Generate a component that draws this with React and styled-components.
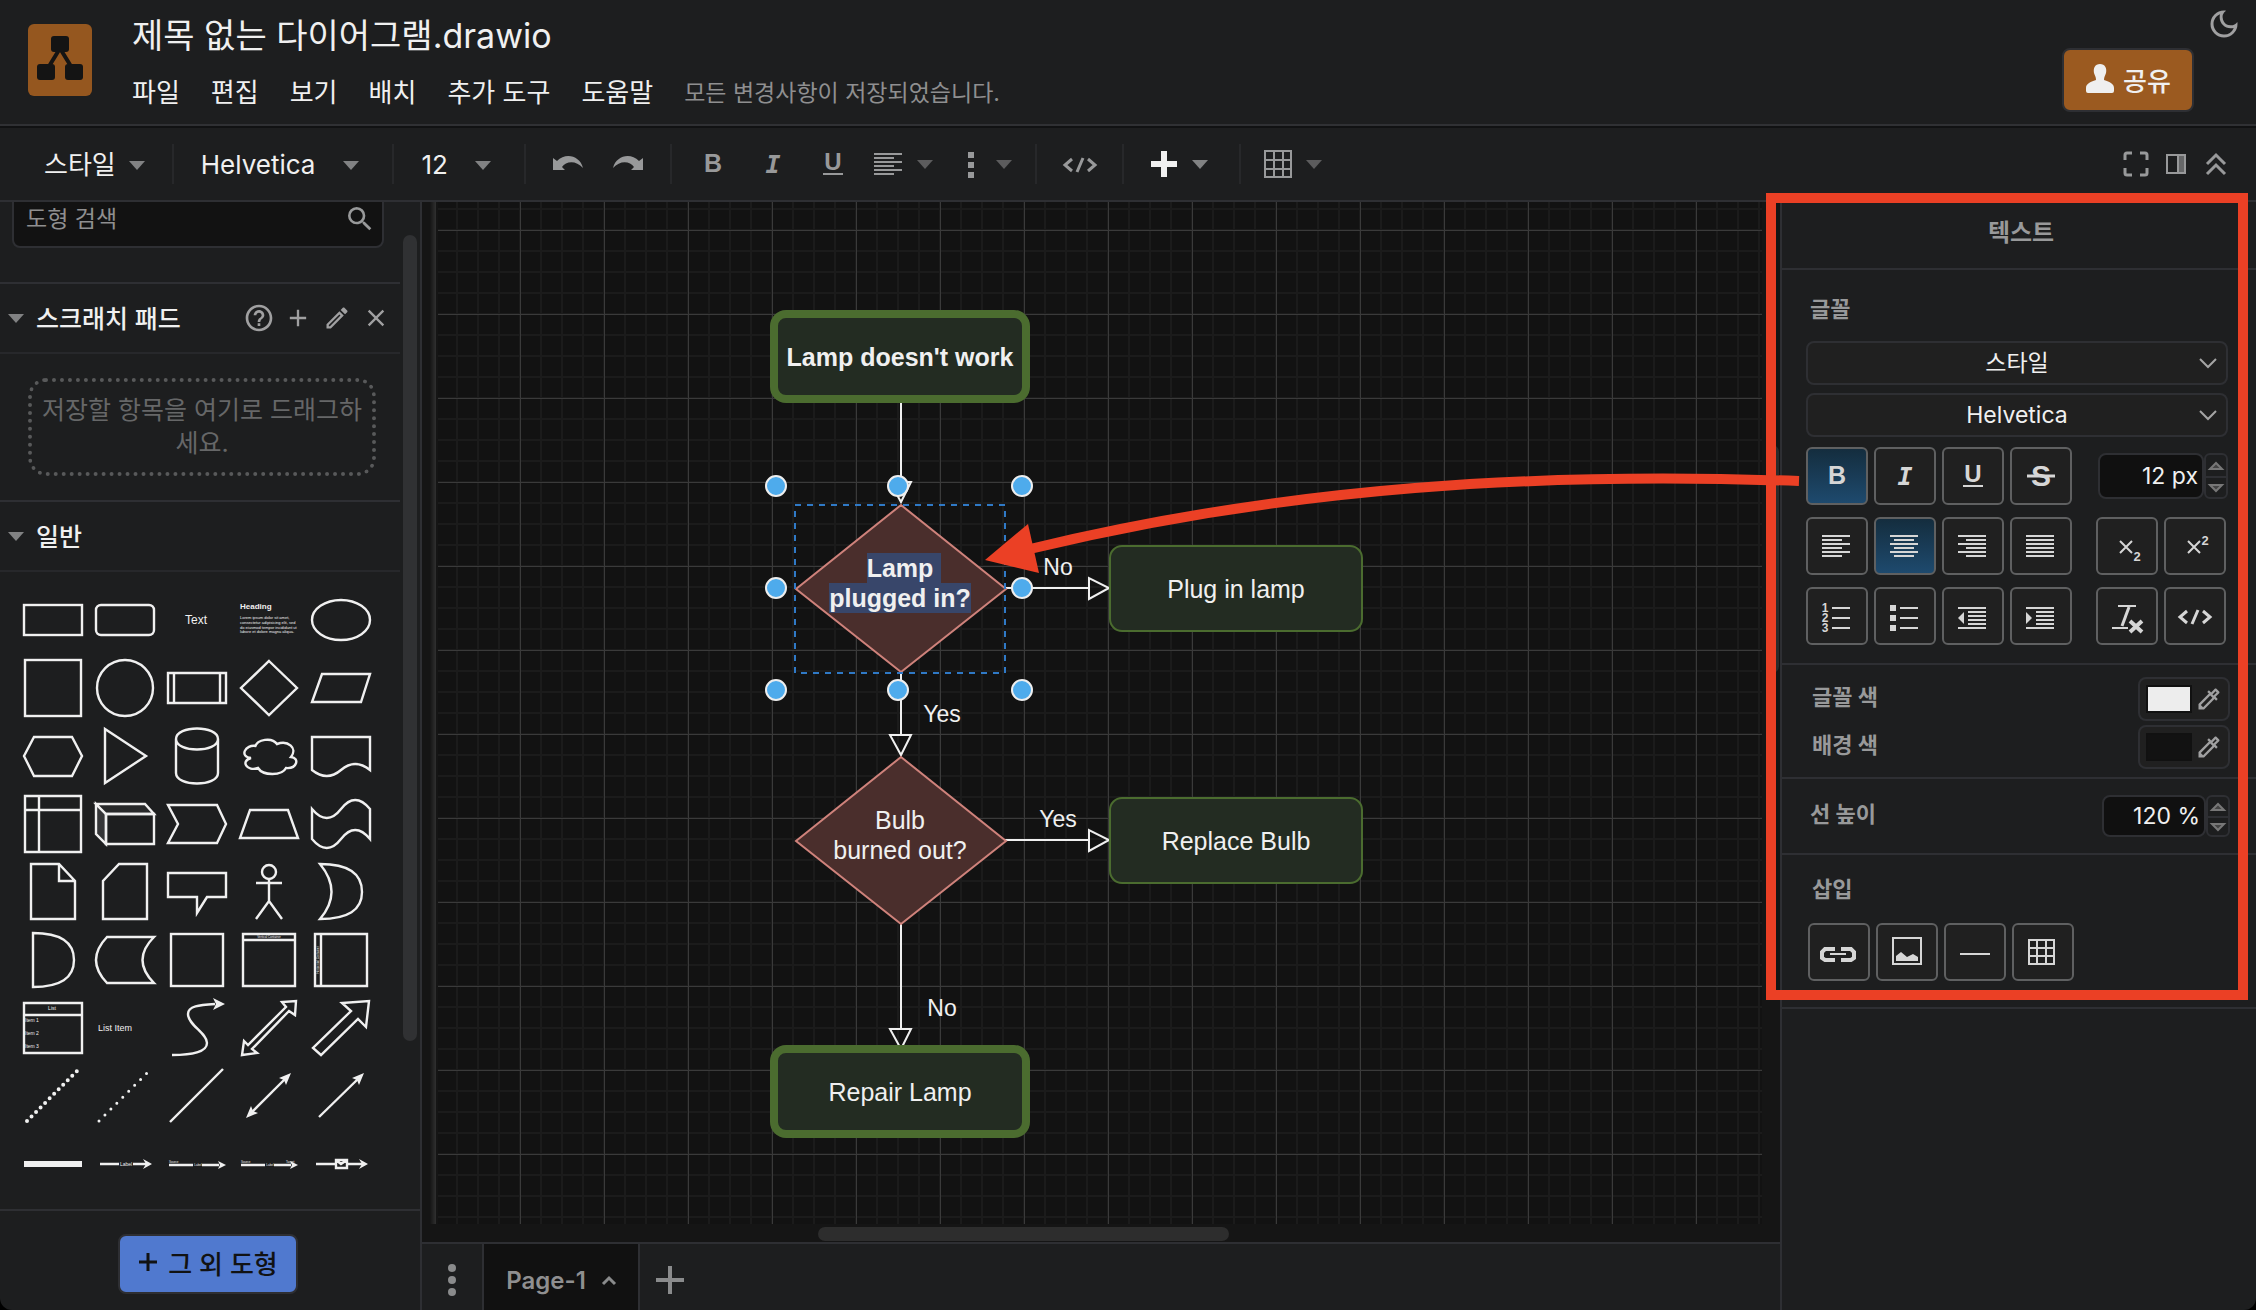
import React, { useState } from "react";
import styled, { createGlobalStyle, css } from "styled-components";
import {
  MdAdd,
  MdClose,
  MdHelpOutline,
  MdOutlineColorize,
  MdOutlineDarkMode,
  MdOutlineEdit,
  MdSearch,
} from "react-icons/md";

const GlobalStyle = createGlobalStyle`
  *, *::before, *::after { box-sizing: border-box; }
  html { background: #000000; }
  body { margin: 0; }
  body, button, input, select {
    font-family: Inter, "Noto Sans CJK KR", sans-serif;
  }
  button { padding: 0; border: none; background: none; color: inherit; cursor: pointer; }
  svg { display: block; flex: none; overflow: visible; }
`;

const menus = ["파일", "편집", "보기", "배치", "추가 도구", "도움말"];

/* ---------- 아이콘 ---------- */

const Caret = ({ dim }) => (
  <svg width="16" height="9" viewBox="0 0 16 9">
    <path d="M0 0H16L8 9Z" fill={dim ? "#5c5c5d" : "#818283"} />
  </svg>
);

const Icon = ({ children, size = 40 }) => (
  <svg
    width={size}
    height={size}
    viewBox={`${-size / 2} ${-size / 2} ${size} ${size}`}
    fill="none"
    stroke="currentColor"
    strokeWidth="2"
  >
    {children}
  </svg>
);

const Letter = ({ children, ...rest }) => (
  <text fill="currentColor" stroke="none" textAnchor="middle" {...rest}>
    {children}
  </text>
);

const glyphs = {
  bold: (
    <Letter y="8" fontFamily="Liberation Sans" fontWeight="700" fontSize="25">
      B
    </Letter>
  ),
  italic: (
    <Letter y="9" fontFamily="DejaVu Sans Mono" fontWeight="700" fontStyle="italic" fontSize="25">
      I
    </Letter>
  ),
  underline: (
    <>
      <Letter y="6" fontFamily="Liberation Sans" fontWeight="700" fontSize="24">
        U
      </Letter>
      <path d="M-10 10H10" />
    </>
  ),
  strike: (
    <>
      <Letter y="10" fontFamily="Liberation Sans" fontWeight="700" fontSize="30">
        S
      </Letter>
      <path d="M-14 0H14" strokeWidth="3" />
    </>
  ),
  left: <path d="M-15 -10H13M-15 -6H5M-15 -2H13M-15 2H5M-15 6H13M-15 10H5" />,
  center: <path d="M-15 -10H13M-11 -6H9M-15 -2H13M-11 2H9M-15 6H13M-11 10H9" />,
  right: <path d="M-15 -10H13M-7 -6H13M-15 -2H13M-7 2H13M-15 6H13M-7 10H13" />,
  justify: <path d="M-15 -10H13M-15 -6H13M-15 -2H13M-15 2H13M-15 6H13M-15 10H13" />,
  ordered: (
    <>
      <path d="M-5 -8H13M-5 2H13M-5 12H13" />
      {[1, 2, 3].map((n) => (
        <Letter key={n} x="-12" y={n * 10 - 14} fontSize="12" fontWeight="700" fontFamily="Liberation Sans">
          {n}
        </Letter>
      ))}
    </>
  ),
  bullets: (
    <>
      <path d="M-5 -8H13M-5 2H13M-5 12H13" />
      <path d="M-15 -8H-9M-15 2H-9M-15 12H-9" strokeWidth="6" />
    </>
  ),
  outdent: (
    <>
      <path d="M-15 -8H13M-5 -4H13M-5 0H13M-5 4H13M-5 8H13M-15 12H13" />
      <path d="M-15 2L-9 -4V8Z" fill="currentColor" stroke="none" />
    </>
  ),
  indent: (
    <>
      <path d="M-15 -8H13M-5 -4H13M-5 0H13M-5 4H13M-5 8H13M-15 12H13" />
      <path d="M-9 2L-15 -4V8Z" fill="currentColor" stroke="none" />
    </>
  ),
  sub: (
    <>
      <path d="M-7 -5L5 7M5 -5L-7 7" />
      <Letter x="10" y="15" fontSize="13" fontWeight="700" fontFamily="Liberation Sans">
        2
      </Letter>
    </>
  ),
  sup: (
    <>
      <path d="M-7 -5L5 7M5 -5L-7 7" />
      <Letter x="10" y="-1" fontSize="13" fontWeight="700" fontFamily="Liberation Sans">
        2
      </Letter>
    </>
  ),
  clear: (
    <>
      <path d="M-9 -10H9M-15 12H1" />
      <path d="M2 -9L-5 10" strokeWidth="3" />
      <path d="M3 5L15 16M15 5L3 16" strokeWidth="4" />
    </>
  ),
  code: <path d="M-8 -5L-15 1L-8 7M3 -6L-3 8M8 -5L15 1L8 7" strokeWidth="3" />,
  link: (
    <>
      <path d="M-4 -3H-14L-17 0V6L-14 8H-4M2 -3H12L15 0V6L12 8H2" strokeWidth="4" />
      <path d="M-9 2H7" />
    </>
  ),
  image: (
    <>
      <path d="M-14 -14H14V12H-14Z" />
      <path d="M-11 9V4L-6 0L0 5L6 2L11 5V9Z" fill="currentColor" stroke="none" />
    </>
  ),
  rule: <path d="M-15 2H15" />,
  table: <path d="M-14 -12H11V12H-14ZM-6 -12V12M3 -12V12M-14 -4H11M-14 4H11" />,
  dots: <path d="M-3 -9H3M-3 1H3M-3 11H3" strokeWidth="6" />,
  plus: <path d="M0 -13V13M-13 0H13" strokeWidth="6" />,
  grid: (
    <path d="M-13 -13H13V13H-13ZM-4 -13V13M5 -13V13M-13 -4H13M-13 5H13" />
  ),
  undo: (
    <path d="M-15 -6V6H-3L-6 3C-2 -3 8 -4 15 4C12 -8 -2 -12 -11 -3Z" fill="currentColor" stroke="none" />
  ),
  redo: (
    <path d="M15 -6V6H3L6 3C2 -3 -8 -4 -15 4C-12 -8 2 -12 11 -3Z" fill="currentColor" stroke="none" />
  ),
  fullscreen: (
    <path d="M-11 -4V-9Q-11 -11 -9 -11H-4M4 -11H9Q11 -11 11 -9V-4M11 4V9Q11 11 9 11H4M-4 11H-9Q-11 11 -11 9V4" strokeWidth="3" />
  ),
  sidepanel: (
    <>
      <path d="M2 -9H9V9H2Z" fill="#666768" />
      <path d="M-9 -9H9V9H-9Z" />
    </>
  ),
  collapse: <path d="M-9 0L0 -9L9 0M-9 10L0 1L9 10" strokeWidth="3" />,
};

/* ---------- 도형 팔레트 (한 칸의 중심이 0,0) ---------- */

const Tiny = (props) => (
  <text fill="#f0f0f0" stroke="none" fontFamily="Liberation Sans" {...props} />
);

const shapes = [
  ["사각형", <rect x="-29" y="-15" width="58" height="30" />],
  ["둥근 사각형", <rect x="-29" y="-15" width="58" height="30" rx="5" />],
  ["텍스트", <Tiny fontSize="12" x="-1" y="4" textAnchor="middle">Text</Tiny>],
  [
    "텍스트 상자",
    <>
      <Tiny fontSize="8" fontWeight="700" x="-29" y="-11">Heading</Tiny>
      <Tiny fontSize="4" x="-29" y="-1">Lorem ipsum dolor sit amet,</Tiny>
      <Tiny fontSize="4" x="-29" y="4">consectetur adipisicing elit, sed</Tiny>
      <Tiny fontSize="4" x="-29" y="9">do eiusmod tempor incididunt ut</Tiny>
      <Tiny fontSize="4" x="-29" y="13">labore et dolore magna aliqua.</Tiny>
    </>,
  ],
  ["타원", <ellipse rx="29" ry="20" />],
  ["정사각형", <rect x="-28" y="-28" width="56" height="56" />],
  ["원", <circle r="28" />],
  ["프로세스", <path d="M-29 -15H29V15H-29ZM-23 -15V15M23 -15V15" />],
  ["마름모", <path d="M0 -27L28 0L0 27L-28 0Z" />],
  ["평행사변형", <path d="M-19 -14H29L20 14H-29Z" />],
  ["육각형", <path d="M-19 -19H19L29 0L19 20H-19L-29 0Z" />],
  ["삼각형", <path d="M-20 -27L21 0L-20 27Z" />],
  ["원통", <path d="M-21 -17V17C-21 31 21 31 21 17V-17C21 -31 -21 -31 -21 -17C-21 -3 21 -3 21 -17" />],
  [
    "구름",
    <path d="M-13 -10C-24 -12 -30 1 -18 2C-29 5 -22 16 -11 12C-6 20 13 20 17 12C28 13 31 2 22 1C29 -8 19 -16 8 -12C3 -19 -12 -17 -14 -9" />,
  ],
  ["문서", <path d="M-29 -19H29V14Q14 2 0 14T-29 14Z" />],
  ["내부 저장소", <path d="M-28 -28H28V28H-28ZM-14 -28V28M-28 -14H28" />],
  [
    "정육면체",
    <>
      <path d="M-29 -20L-19 -10V20L-29 10Z" fill="#343537" />
      <path d="M-29 -20H20L29 -10H-19Z" fill="#28292a" />
      <path d="M-19 -10H29V20H-19Z" />
    </>,
  ],
  ["단계", <path d="M-29 -19H20L29 0L20 19H-29L-19 0Z" />],
  ["사다리꼴", <path d="M-19 -14H19L29 14H-29Z" />],
  ["테이프", <path d="M-29 -15Q-14 3 0 -15T29 -15V15Q14 -3 0 15T-29 15Z" />],
  ["노트", <path d="M-22 -28H6L22 -11V27H-22ZM6 -28V-11H22" />],
  ["카드", <path d="M-6 -28H22V27H-22V-11Z" />],
  ["말풍선", <path d="M-29 -19H29V5H10L0 21V5H-29Z" />],
  [
    "액터",
    <>
      <circle cy="-20" r="7" />
      <path d="M0 -13V9M-13 -9H13M-13 27L0 9L13 27" />
    </>,
  ],
  ["또는", <path d="M-21 -28Q21 -28 21 0Q21 27 -21 27Q2 0 -21 -28Z" />],
  ["그리고", <path d="M-20 -27Q21 -27 21 0Q21 27 -20 27Z" />],
  ["데이터 저장소", <path d="M-18 -23H29Q6 0 29 23H-18Q-40 0 -18 -23Z" />],
  ["컨테이너", <rect x="-26" y="-26" width="52" height="52" />],
  [
    "세로 컨테이너",
    <>
      <path d="M-26 -26H26V26H-26ZM-26 -20H26" />
      <Tiny fontSize="3" y="-22" textAnchor="middle">Vertical Container</Tiny>
    </>,
  ],
  [
    "가로 컨테이너",
    <>
      <path d="M-26 -26H26V26H-26ZM-20 -26V26" />
      <Tiny fontSize="3" y="-22" textAnchor="middle" transform="rotate(-90)">Horizontal Container</Tiny>
    </>,
  ],
  [
    "목록",
    <>
      <path d="M-29 -25H29V25H-29ZM-29 -13H29" />
      <Tiny fontSize="5" x="-1" y="-18" textAnchor="middle">List</Tiny>
      <Tiny fontSize="5" x="-28" y="-6">Item 1</Tiny>
      <Tiny fontSize="5" x="-28" y="7">Item 2</Tiny>
      <Tiny fontSize="5" x="-28" y="20">Item 3</Tiny>
    </>,
  ],
  ["목록 항목", <Tiny fontSize="9" x="-27" y="3">List Item</Tiny>],
  [
    "곡선",
    <>
      <path d="M-25 27C-5 27 10 24 10 15C10 5 -9 -3 -9 -14C-9 -22 2 -23 18 -24" />
      <path d="M28 -24L16 -30L19 -24L16 -18Z" fill="#f0f0f0" stroke="none" />
    </>,
  ],
  [
    "양방향 화살표",
    <path d="M27 -27L26 -13L20 -17L-17 21L-12 25L-27 27L-25 13L-21 17L17 -21L13 -26Z" />,
  ],
  ["화살표", <path d="M28 -27L25 -1L17 -9L-20 27L-28 20L10 -17L1 -25Z" />],
  ["파선", <path d="M-26 25L25 -26" strokeWidth="4" strokeDasharray="0 6.4" strokeLinecap="round" />],
  ["점선", <path d="M-26 25L22 -23" strokeWidth="3" strokeDasharray="0 8.4" strokeLinecap="round" />],
  ["선", <path d="M-27 26L26 -27" />],
  [
    "양방향 연결선",
    <>
      <path d="M-18 17L17 -18" />
      <path d="M22 -23L10 -18L15 -16L17 -11ZM-23 22L-11 17L-16 15L-18 10Z" fill="#f0f0f0" stroke="none" />
    </>,
  ],
  [
    "방향 연결선",
    <>
      <path d="M-22 21L18 -18" />
      <path d="M23 -23L11 -18L16 -16L18 -11Z" fill="#f0f0f0" stroke="none" />
    </>,
  ],
  ["링크", <path d="M-29 0H29" strokeWidth="6" />],
  [
    "레이블 연결선",
    <>
      <path d="M-25 0H-6M8 0H21" />
      <path d="M27 0L18 -5L21 0L18 5Z" fill="#f0f0f0" stroke="none" />
      <Tiny fontSize="5" x="1" y="2" textAnchor="middle">Label</Tiny>
    </>,
  ],
  [
    "레이블 둘",
    <>
      <path d="M-28 1H-4M5 1H22" />
      <path d="M29 1L21 -3L23 1L21 5Z" fill="#f0f0f0" stroke="none" />
      <Tiny fontSize="3" x="-28" y="-1">Source</Tiny>
      <Tiny fontSize="3" x="1" y="2" textAnchor="middle">Label</Tiny>
    </>,
  ],
  [
    "레이블 셋",
    <>
      <path d="M-28 1H-4M5 1H22" />
      <path d="M29 1L21 -3L23 1L21 5Z" fill="#f0f0f0" stroke="none" />
      <Tiny fontSize="3" x="-28" y="-1">Source</Tiny>
      <Tiny fontSize="3" x="1" y="2" textAnchor="middle">Label</Tiny>
      <Tiny fontSize="3" x="17" y="-1">Target</Tiny>
    </>,
  ],
  [
    "기호 연결선",
    <>
      <path d="M-25 0H21" />
      <path d="M27 0L18 -5L21 0L18 5Z" fill="#f0f0f0" stroke="none" />
      <path d="M-5 -4H6V4H-5ZM-5 -4L0 0L6 -4" fill="#1d1e1f" />
    </>,
  ],
];

/* ---------- 캔버스 데이터 ---------- */

const nodes = [
  { id: "start", x: 332, y: 108, w: 260, h: 93, text: "Lamp doesn't work", thick: true, bold: true },
  { id: "plug", x: 671, y: 343, w: 254, h: 87, text: "Plug in lamp" },
  { id: "replace", x: 671, y: 595, w: 254, h: 87, text: "Replace Bulb" },
  { id: "repair", x: 332, y: 843, w: 260, h: 93, text: "Repair Lamp", thick: true },
];

const edgeLabels = [
  { x: 620, y: 365, text: "No" },
  { x: 504, y: 512, text: "Yes" },
  { x: 620, y: 617, text: "Yes" },
  { x: 504, y: 806, text: "No" },
];

const handles = [
  [338, 284], [460, 284], [584, 284],
  [338, 386], [584, 386],
  [338, 488], [460, 488], [584, 488],
];

const Toolbar = () => (
  <StToolbar>
    <StToolGroup $left={44} $right={27}>
      <StTextMenu $gap={13}>
        스타일 <Caret />
      </StTextMenu>
    </StToolGroup>
    <StToolGroup $left={27} $right={33}>
      <StTextMenu $gap={28}>
        Helvetica <Caret />
      </StTextMenu>
    </StToolGroup>
    <StToolGroup $left={27} $right={33}>
      <StTextMenu $gap={27}>
        12 <Caret />
      </StTextMenu>
    </StToolGroup>
    <StToolGroup $left={27} $right={27} $gap={30}>
      <StToolButton aria-label="실행 취소"><Icon size={30}>{glyphs.undo}</Icon></StToolButton>
      <StToolButton aria-label="다시 실행"><Icon size={30}>{glyphs.redo}</Icon></StToolButton>
    </StToolGroup>
    <StToolGroup $left={26} $right={23} $gap={26}>
      <StToolSet>
        <StToolButton aria-label="굵게"><Icon size={30}>{glyphs.bold}</Icon></StToolButton>
        <StToolButton aria-label="기울임"><Icon size={30}>{glyphs.italic}</Icon></StToolButton>
        <StToolButton aria-label="밑줄"><Icon size={30}>{glyphs.underline}</Icon></StToolButton>
      </StToolSet>
      <StToolButton aria-label="정렬"><Icon size={30}>{glyphs.left}</Icon><Caret dim /></StToolButton>
      <StToolButton aria-label="서식"><Icon size={24}>{glyphs.dots}</Icon><Caret dim /></StToolButton>
    </StToolGroup>
    <StToolGroup $left={26} $right={25}>
      <StToolButton aria-label="HTML"><Icon size={34}>{glyphs.code}</Icon></StToolButton>
    </StToolGroup>
    <StToolGroup $left={25} $right={31}>
      <StToolButton aria-label="삽입" $bright><Icon size={30}>{glyphs.plus}</Icon><Caret /></StToolButton>
    </StToolGroup>
    <StToolGroup $left={22} $right={0} $last>
      <StToolButton aria-label="표"><Icon size={30}>{glyphs.grid}</Icon><Caret dim /></StToolButton>
    </StToolGroup>
    <StViewTools>
      <StToolButton aria-label="전체 화면"><Icon size={28}>{glyphs.fullscreen}</Icon></StToolButton>
      <StToolButton aria-label="서식 패널"><Icon size={28}>{glyphs.sidepanel}</Icon></StToolButton>
      <StToolButton aria-label="접기"><Icon size={28}>{glyphs.collapse}</Icon></StToolButton>
    </StViewTools>
  </StToolbar>
);

const Sidebar = () => (
  <StSidebar>
    <StSidebarScroll>
      <StSidebarContent>
        <StSearchBox>
          <StSearchInput aria-label="도형 검색" placeholder="도형 검색" />
          <MdSearch size={32} />
        </StSearchBox>
        <StSectionHeader>
          <Caret />
          <StSectionTitle>스크래치 패드</StSectionTitle>
          <StSectionTools>
            <StSmallButton aria-label="도움말"><MdHelpOutline size={32} /></StSmallButton>
            <StSmallButton aria-label="추가"><MdAdd size={28} /></StSmallButton>
            <StSmallButton aria-label="편집"><MdOutlineEdit size={28} /></StSmallButton>
            <StSmallButton aria-label="닫기"><MdClose size={28} /></StSmallButton>
          </StSectionTools>
        </StSectionHeader>
        <StScratchArea>
          <StDropZone>저장할 항목을 여기로 드래그하세요.</StDropZone>
        </StScratchArea>
        <StSectionHeader>
          <Caret />
          <StSectionTitle>일반</StSectionTitle>
        </StSectionHeader>
        <StShapeGrid>
          {shapes.map(([name, drawing]) => (
            <StShapeButton key={name} aria-label={name}>
              <svg width="72" height="68" viewBox="-36 -34 72 68" fill="none" stroke="#f0f0f0" strokeWidth="2.4">
                {drawing}
              </svg>
            </StShapeButton>
          ))}
        </StShapeGrid>
      </StSidebarContent>
      <StSidebarThumb />
    </StSidebarScroll>
    <StSidebarFooter>
      <StMoreShapes>
        <Icon size={20}>
          <path d="M0 -9V9M-9 0H9" strokeWidth="3" />
        </Icon>
        그 외 도형
      </StMoreShapes>
    </StSidebarFooter>
  </StSidebar>
);

const Diagram = () => (
  <StPage>
    <StEdges width="1000" height="960" viewBox="0 0 1000 960" fill="none" stroke="#f0f0f0" strokeWidth="2">
      <path d="M463 200V280M452 280H473L463 300Z" />
      <path d="M567 386H651M651 376V397L671 386Z" />
      <path d="M463 470V533M452 533H473L463 553Z" />
      <path d="M567 638H651M651 628V649L671 638Z" />
      <path d="M463 722V827M452 827H473L463 847Z" />
      <g fill="#4a2e2c" stroke="#cf827b">
        <path d="M463 303L568 387L463 470L358 387Z" />
        <path d="M463 555L568 639L463 722L358 639Z" />
      </g>
    </StEdges>
    {nodes.map((node) => (
      <StNode key={node.id} $x={node.x} $y={node.y} $w={node.w} $h={node.h} $thick={node.thick} $bold={node.bold}>
        {node.text}
      </StNode>
    ))}
    <StNodeText $x={358} $y={299} $bold>
      <StMark $lineEnd>Lamp</StMark>
      <StMark>plugged in?</StMark>
    </StNodeText>
    <StNodeText $x={358} $y={551}>
      <span>Bulb</span>
      <span>burned out?</span>
    </StNodeText>
    {edgeLabels.map((label) => (
      <StEdgeLabel key={`${label.x}-${label.y}`} $x={label.x} $y={label.y}>
        {label.text}
      </StEdgeLabel>
    ))}
    <StEdges width="1000" height="960" viewBox="0 0 1000 960" fill="none" strokeWidth="2">
      <rect x="357" y="303" width="210" height="168" stroke="#2f79c6" strokeDasharray="6 6" />
      {handles.map(([x, y]) => (
        <circle key={`${x}-${y}`} cx={x} cy={y} r="10" fill="#4eabec" stroke="#eeeeee" />
      ))}
    </StEdges>
  </StPage>
);

const FormatButton = ({ name, label, pressed }) => (
  <StFormatButton aria-label={label} aria-pressed={!!pressed} $active={pressed}>
    <Icon>{glyphs[name]}</Icon>
  </StFormatButton>
);

const NumberField = ({ label, id, width, height, value }) => {
  const [current, setCurrent] = useState(value);
  return (
    <StNumberField>
      <StNumberInput
        id={id}
        aria-label={label}
        $width={width}
        $height={height}
        value={current}
        onChange={(e) => setCurrent(e.target.value)}
      />
      <StSpinner $height={height}>
        <StSpinButton aria-label="증가">
          <svg width="16" height="8" viewBox="0 0 16 8"><path d="M2 7H14L8 1Z" fill="#444" stroke="#777" strokeWidth="2" /></svg>
        </StSpinButton>
        <StSpinButton aria-label="감소">
          <svg width="16" height="8" viewBox="0 0 16 8"><path d="M2 1H14L8 7Z" fill="#444" stroke="#777" strokeWidth="2" /></svg>
        </StSpinButton>
      </StSpinner>
    </StNumberField>
  );
};

const SelectField = ({ label, value }) => (
  <StSelectBox>
    <StSelect aria-label={label} defaultValue={value}>
      <option>{value}</option>
    </StSelect>
    <svg width="18" height="11" viewBox="0 0 18 11" fill="none" stroke="#a5a5a5" strokeWidth="2">
      <path d="M1 1L9 9L17 1" />
    </svg>
  </StSelectBox>
);

const ColorRow = ({ id, label, value }) => (
  <StColorRow>
    <StFormatLabel htmlFor={id}>{label}</StFormatLabel>
    <StColorBox>
      <StColorInput id={id} type="color" defaultValue={value} />
      <StSmallButton aria-label={`${label} 추출`}><MdOutlineColorize size={28} /></StSmallButton>
    </StColorBox>
  </StColorRow>
);

const FormatPanel = () => (
  <StFormatPanel>
    <StFormatContent>
      <StFormatTitle>텍스트</StFormatTitle>
      <StFontSection>
        <StFormatLabel as="h3">글꼴</StFormatLabel>
        <StSelectStack>
          <SelectField label="스타일" value="스타일" />
          <SelectField label="글꼴" value="Helvetica" />
        </StSelectStack>
        <StButtonRows>
          <StButtonRow>
            <StButtonSet>
              <FormatButton name="bold" label="굵게" pressed />
              <FormatButton name="italic" label="기울임" />
              <FormatButton name="underline" label="밑줄" />
              <FormatButton name="strike" label="취소선" />
            </StButtonSet>
            <NumberField label="글꼴 크기" width={106} height={46} value="12 px" />
          </StButtonRow>
          <StButtonRow>
            <StButtonSet>
              <FormatButton name="left" label="왼쪽" />
              <FormatButton name="center" label="가운데" pressed />
              <FormatButton name="right" label="오른쪽" />
              <FormatButton name="justify" label="양쪽" />
            </StButtonSet>
            <StButtonSet $inset>
              <FormatButton name="sub" label="아래 첨자" />
              <FormatButton name="sup" label="위 첨자" />
            </StButtonSet>
          </StButtonRow>
          <StButtonRow>
            <StButtonSet>
              <FormatButton name="ordered" label="번호 목록" />
              <FormatButton name="bullets" label="글머리 기호" />
              <FormatButton name="outdent" label="내어쓰기" />
              <FormatButton name="indent" label="들여쓰기" />
            </StButtonSet>
            <StButtonSet $inset>
              <FormatButton name="clear" label="서식 제거" />
              <FormatButton name="code" label="HTML" />
            </StButtonSet>
          </StButtonRow>
        </StButtonRows>
      </StFontSection>
      <StColorSection>
        <ColorRow id="font-color" label="글꼴 색" value="#ededed" />
        <ColorRow id="back-color" label="배경 색" value="#121212" />
      </StColorSection>
      <StLineSection>
        <StFormatLabel htmlFor="line-height">선 높이</StFormatLabel>
        <NumberField id="line-height" width={104} height={42} value="120 %" />
      </StLineSection>
      <StInsertSection>
        <StFormatLabel as="h3">삽입</StFormatLabel>
        <StButtonSet>
          <FormatButton name="link" label="링크" />
          <FormatButton name="image" label="이미지" />
          <FormatButton name="rule" label="가로줄" />
          <FormatButton name="table" label="표" />
        </StButtonSet>
      </StInsertSection>
      <StCalloutBox />
    </StFormatContent>
  </StFormatPanel>
);

const App = () => {
  return (
    <StApp>
      <GlobalStyle />
      <StHeader>
        <svg width="64" height="72" viewBox="0 0 64 72">
          <rect width="64" height="72" rx="6" fill="#95571f" />
          <path d="M31 26L20 44M33 26L44 44" stroke="#141414" strokeWidth="4" />
          <rect x="23" y="12" width="18" height="16" rx="3" fill="#141414" />
          <rect x="9" y="40" width="18" height="16" rx="3" fill="#141414" />
          <rect x="37" y="40" width="18" height="16" rx="3" fill="#141414" />
        </svg>
        <StTitles>
          <StTitle>제목 없는 다이어그램.drawio</StTitle>
          <StMenuBar>
            {menus.map((menu) => (
              <StMenuItem key={menu}>{menu}</StMenuItem>
            ))}
            <StStatus>모든 변경사항이 저장되었습니다.</StStatus>
          </StMenuBar>
        </StTitles>
        <StShareButton>
          <svg width="30" height="32" viewBox="0 0 30 32">
            <path
              d="M15 1C10 1 8 5 9 10C10 13 11 14 11 17C5 19 1 21 1 25V28Q1 30 3 30H27Q29 30 29 28V25C29 21 25 19 19 17C19 14 20 13 21 10C22 5 20 1 15 1Z"
              fill="#efefef"
            />
          </svg>
          공유
        </StShareButton>
        <StThemeButton aria-label="테마">
          <MdOutlineDarkMode size={36} />
        </StThemeButton>
      </StHeader>
      <Toolbar />
      <StBody>
        <Sidebar />
        <StCanvasArea>
          <StCanvas>
            <StPageEdge />
            <Diagram />
            <StVerticalTrack>
              <StVerticalThumb />
            </StVerticalTrack>
          </StCanvas>
          <StHorizontalTrack>
            <StHorizontalThumb />
          </StHorizontalTrack>
          <StPageTabs>
            <StPagesButton aria-label="페이지">
              <svg width="10" height="34" viewBox="0 0 10 34" fill="#8a8b8c">
                <circle cx="5" cy="5" r="4" />
                <circle cx="5" cy="17" r="4" />
                <circle cx="5" cy="29" r="4" />
              </svg>
            </StPagesButton>
            <StPageTab>
              Page-1
              <svg width="14" height="9" viewBox="0 0 14 9" fill="none" stroke="#8a8b8c" strokeWidth="3">
                <path d="M1 8L7 2L13 8" />
              </svg>
            </StPageTab>
            <StAddPage aria-label="페이지 추가">
              <Icon size={28}>
                <path d="M0 -14V14M-14 0H14" strokeWidth="4" />
              </Icon>
            </StAddPage>
          </StPageTabs>
        </StCanvasArea>
        <FormatPanel />
        <StCalloutArrow width="1800" height="400" viewBox="0 0 1800 400">
          <path d="M1799 279C1540 270 1290 284 1030 347" fill="none" stroke="#eb4025" strokeWidth="10" />
          <path d="M985 358L1028 322L1039 371Z" fill="#eb4025" />
        </StCalloutArrow>
      </StBody>
    </StApp>
  );
};

export default App;

const line = "#2e2f33";

const StApp = styled.div`
  display: flex;
  flex-direction: column;
  height: 100vh;
  min-width: 1500px;
  overflow: hidden;
  border-radius: 0 0 12px 12px;
  background-color: #1d1e1f;
  color: #f0f0f0;
`;

const StHeader = styled.header`
  display: flex;
  align-items: flex-start;
  height: 126px;
  padding: 24px 14px 0 28px;
  border-bottom: 2px solid #303134;
  flex: none;
`;

const StTitles = styled.div`
  flex: 1;
  margin: -12px 0 0 40px;
`;

const StTitle = styled.h1`
  margin: 0;
  font-size: 34px;
  font-weight: 400;
  line-height: 48px;
`;

const StMenuBar = styled.nav`
  display: flex;
  align-items: center;
  gap: 31px;
  margin-top: 13px;
`;

const StMenuItem = styled.button`
  font-size: 26px;
  line-height: 40px;
  white-space: nowrap;
`;

const StStatus = styled.span`
  font-size: 23px;
  line-height: 40px;
  color: #8f8f90;
  white-space: nowrap;
`;

const StShareButton = styled.button`
  display: flex;
  align-items: center;
  justify-content: center;
  gap: 8px;
  width: 132px;
  height: 64px;
  margin-top: 24px;
  padding-bottom: 2px;
  border: 2px solid ${line};
  border-radius: 8px;
  background-color: #9b5a20;
  font-size: 26px;
  font-weight: 500;
`;

const StThemeButton = styled.button`
  margin: -18px 0 0 12px;
  color: #a0a0a1;
`;

const StToolbar = styled.div`
  display: flex;
  align-items: center;
  height: 76px;
  border-top: 2px solid #111213;
  border-bottom: 2px solid ${line};
  flex: none;
`;

const StToolGroup = styled.div`
  display: flex;
  align-items: center;
  gap: ${(props) => props.$gap || 0}px;
  height: 40px;
  padding: 0 ${(props) => props.$right}px 0 ${(props) => props.$left}px;
  border-right: ${(props) => (props.$last ? "none" : "2px solid #27282a")};
`;

const StTextMenu = styled.button`
  display: flex;
  align-items: center;
  gap: ${(props) => props.$gap}px;
  padding-top: 2px;
  font-size: 26px;
  line-height: 40px;
  white-space: nowrap;
`;

const StToolSet = styled.div`
  display: flex;
  gap: 30px;
`;

const StToolButton = styled.button`
  display: flex;
  align-items: center;
  gap: 13px;
  color: ${(props) => (props.$bright ? "#f0f0f0" : "#98999a")};
`;

const StViewTools = styled.div`
  display: flex;
  gap: 12px;
  margin-left: auto;
  padding-right: 26px;
`;

const StBody = styled.div`
  position: relative;
  display: flex;
  flex: 1;
  min-height: 0;
`;

const StSidebar = styled.aside`
  display: flex;
  flex-direction: column;
  width: 422px;
  border-right: 2px solid ${line};
  flex: none;
`;

const StSidebarScroll = styled.div`
  display: flex;
  flex: 1;
  min-height: 0;
  overflow: hidden;
`;

const StSidebarContent = styled.div`
  width: 400px;
`;

const StSidebarThumb = styled.div`
  width: 14px;
  height: 80%;
  margin: 33px 0 0 3px;
  border-radius: 7px;
  background-color: #303133;
`;

const StSearchBox = styled.div`
  display: flex;
  align-items: center;
  height: 58px;
  margin: -12px 16px 34px 12px;
  padding: 0 6px 0 12px;
  border: 2px solid ${line};
  border-radius: 8px;
  background-color: #121212;
  color: #98999a;
`;

const StSearchInput = styled.input`
  flex: 1;
  min-width: 0;
  padding: 0;
  border: none;
  outline: none;
  background: none;
  color: #f0f0f0;
  font-size: 23px;
  &::placeholder {
    color: #8f8f90;
  }
`;

const StSectionHeader = styled.div`
  display: flex;
  align-items: center;
  gap: 12px;
  height: 72px;
  padding: 0 10px 0 8px;
  border-top: 2px solid ${line};
  border-bottom: 2px solid #27282b;
`;

const StSectionTitle = styled.h2`
  margin: 0;
  padding-bottom: 2px;
  font-size: 25px;
  font-weight: 500;
`;

const StSectionTools = styled.div`
  display: flex;
  gap: 11px;
  margin-left: auto;
`;

const StSmallButton = styled.button`
  display: flex;
  align-items: center;
  justify-content: center;
  width: 28px;
  height: 32px;
  color: #a0a0a1;
`;

const StScratchArea = styled.div`
  padding: 24px 24px 24px 28px;
`;

const StDropZone = styled.div`
  display: flex;
  align-items: center;
  justify-content: center;
  height: 98px;
  padding: 0 4px;
  border: 4px dotted #58595a;
  border-radius: 18px;
  color: #666768;
  font-size: 25px;
  line-height: 33px;
  text-align: center;
  word-break: break-all;
`;

const StShapeGrid = styled.div`
  display: grid;
  grid-template-columns: repeat(5, 72px);
  padding: 14px 0 0 17px;
`;

const StShapeButton = styled.button`
  height: 68px;
`;

const StSidebarFooter = styled.div`
  display: flex;
  justify-content: center;
  height: 101px;
  padding: 23px 4px 0 0;
  border-top: 2px solid ${line};
  flex: none;
`;

const StMoreShapes = styled.button`
  display: flex;
  align-items: center;
  justify-content: center;
  gap: 10px;
  width: 180px;
  height: 60px;
  padding-bottom: 4px;
  border: 2px solid ${line};
  border-radius: 8px;
  background-color: #5079cf;
  color: #111213;
  font-size: 26px;
  font-weight: 500;
`;

const StCanvasArea = styled.main`
  display: flex;
  flex-direction: column;
  flex: 1;
  min-width: 0;
  background-color: #151515;
`;

const StCanvas = styled.div`
  display: flex;
  flex: 1;
  min-height: 0;
`;

const StPageEdge = styled.div`
  width: 6px;
  margin: 0 2px 0 8px;
  background: linear-gradient(to right, #151515, #303030);
  flex: none;
`;

const StPage = styled.div`
  position: relative;
  flex: 1;
  overflow: hidden;
  background-color: #121212;
  background-image: linear-gradient(to right, #3a3a3a 1px, transparent 1px),
    linear-gradient(to bottom, #3a3a3a 1px, transparent 1px),
    linear-gradient(to right, #1b1b1b 2px, transparent 2px),
    linear-gradient(to bottom, #1b1b1b 2px, transparent 2px);
  background-size: 84px 84px, 84px 84px, 21px 21px, 21px 21px;
  background-position: 82px 0, 0 28px, 18px 0, 0 6px;
`;

const StEdges = styled.svg`
  position: absolute;
  top: 0;
  left: 0;
`;

const diagramText = css`
  font-family: "Liberation Sans", Arial, sans-serif;
  font-size: 25px;
  line-height: 30px;
  font-weight: ${(props) => (props.$bold ? 700 : 400)};
  color: #f0f0f0;
  white-space: nowrap;
`;

const StNode = styled.div`
  ${diagramText}
  position: absolute;
  left: ${(props) => props.$x}px;
  top: ${(props) => props.$y}px;
  width: ${(props) => props.$w}px;
  height: ${(props) => props.$h}px;
  display: flex;
  align-items: center;
  justify-content: center;
  border: ${(props) => (props.$thick ? 8 : 2)}px solid #4b6c2f;
  border-radius: ${(props) => (props.$thick ? 16 : 13)}px;
  background-color: #232c22;
`;

const StNodeText = styled.div`
  ${diagramText}
  position: absolute;
  left: ${(props) => props.$x}px;
  top: ${(props) => props.$y}px;
  width: 208px;
  height: 164px;
  display: flex;
  flex-direction: column;
  align-items: center;
  justify-content: center;
`;

const StMark = styled.mark`
  background-color: #38466a;
  box-shadow: ${(props) => (props.$lineEnd ? "8px 0 0 #38466a" : "none")};
  color: inherit;
`;

const StEdgeLabel = styled.span`
  ${diagramText}
  position: absolute;
  left: ${(props) => props.$x}px;
  top: ${(props) => props.$y}px;
  font-size: 23px;
  transform: translate(-50%, -50%);
`;

const StVerticalTrack = styled.div`
  width: 18px;
  padding: 243px 1px 0 4px;
  flex: none;
`;

const StVerticalThumb = styled.div`
  height: 228px;
  border-radius: 7px;
  background-color: #2b2b2b;
`;

const StHorizontalTrack = styled.div`
  height: 18px;
  padding: 3px 551px 1px 396px;
`;

const StHorizontalThumb = styled.div`
  height: 14px;
  border-radius: 7px;
  background-color: #2d2d2d;
`;

const StPageTabs = styled.div`
  display: flex;
  height: 68px;
  border-top: 2px solid ${line};
  background-color: #1d1e1f;
  color: #8a8b8c;
`;

const StPagesButton = styled.button`
  display: flex;
  align-items: center;
  justify-content: center;
  width: 60px;
  padding-top: 6px;
`;

const StPageTab = styled.button`
  display: flex;
  align-items: center;
  justify-content: center;
  gap: 16px;
  width: 158px;
  padding-top: 6px;
  border-left: 2px solid ${line};
  border-right: 2px solid ${line};
  background-color: #111111;
  color: #8f8f90;
  font-size: 24px;
  font-weight: 600;
`;

const StAddPage = styled.button`
  display: flex;
  align-items: center;
  padding: 6px 16px 0;
`;

const StFormatPanel = styled.aside`
  width: 476px;
  border-left: 2px solid ${line};
  flex: none;
`;

const StFormatContent = styled.div`
  position: relative;
`;

const StFormatTitle = styled.h2`
  margin: 0;
  height: 68px;
  padding-left: 4px;
  border-bottom: 2px solid ${line};
  color: #98999a;
  font-size: 24px;
  font-weight: 700;
  line-height: 62px;
  text-align: center;
`;

const StFormatLabel = styled.label`
  display: block;
  margin: 0;
  padding: 0 0 4px 4px;
  color: #98999a;
  font-size: 22px;
  font-weight: 700;
  line-height: 30px;
`;

const section = css`
  border-bottom: 2px solid ${line};
`;

const StFontSection = styled.section`
  ${section}
  padding: 24px 26px 18px 24px;
`;

const StSelectStack = styled.div`
  display: grid;
  gap: 8px;
  margin-top: 13px;
`;

const StSelectBox = styled.div`
  display: grid;
  grid-template-columns: 1fr 18px 9px;
  align-items: center;
  height: 44px;
  margin-right: 2px;
  border: 2px solid ${line};
  border-radius: 8px;
  background-color: #202020;
  svg {
    grid-area: 1 / 2;
    pointer-events: none;
  }
`;

const StSelect = styled.select`
  grid-area: 1 / 1 / 2 / 4;
  height: 40px;
  padding: 0;
  border: none;
  outline: none;
  appearance: none;
  background: none;
  color: #f0f0f0;
  font-size: 23px;
  text-align: center;
  text-align-last: center;
`;

const StButtonRows = styled.div`
  display: grid;
  gap: 12px;
  margin-top: 10px;
`;

const StButtonRow = styled.div`
  display: flex;
  align-items: center;
  justify-content: space-between;
  padding-right: 2px;
`;

const StButtonSet = styled.div`
  display: flex;
  gap: 6px;
  padding-right: ${(props) => (props.$inset ? 2 : 0)}px;
`;

const StFormatButton = styled.button`
  display: flex;
  align-items: center;
  justify-content: center;
  width: 62px;
  height: 58px;
  border: 2px solid #5f6061;
  border-radius: 6px;
  background: ${(props) => (props.$active ? "linear-gradient(#142d3e, #1e4a6e)" : "#202020")};
  color: #d6d6d6;
`;

const StNumberField = styled.div`
  display: flex;
`;

const StNumberInput = styled.input`
  width: ${(props) => props.$width}px;
  height: ${(props) => props.$height}px;
  padding: 0 4px;
  border: 2px solid ${line};
  border-radius: 8px;
  outline: none;
  background-color: #101010;
  color: #f0f0f0;
  font-size: 23px;
  text-align: right;
`;

const StSpinner = styled.div`
  display: grid;
  grid-template-rows: 1fr 1fr;
  width: 24px;
  height: ${(props) => props.$height}px;
  border: 2px solid ${line};
  border-radius: 6px;
`;

const StSpinButton = styled.button`
  display: flex;
  align-items: center;
  justify-content: center;
  & + & {
    border-top: 2px solid ${line};
  }
`;

const StColorSection = styled.section`
  ${section}
  display: grid;
  gap: 4px;
  padding: 12px 26px 8px 26px;
`;

const StColorRow = styled.div`
  display: flex;
  align-items: center;
  justify-content: space-between;
  height: 44px;
`;

const StColorBox = styled.div`
  display: flex;
  align-items: center;
  gap: 3px;
  width: 92px;
  height: 44px;
  padding-left: 6px;
  border: 2px solid ${line};
  border-radius: 8px;
  background-color: #202020;
`;

const StColorInput = styled.input`
  width: 46px;
  height: 28px;
  padding: 0;
  border: 2px solid #111111;
  background: none;
  appearance: none;
  &::-webkit-color-swatch-wrapper {
    padding: 0;
  }
  &::-webkit-color-swatch {
    border: none;
  }
`;

const StLineSection = styled.section`
  ${section}
  display: flex;
  align-items: center;
  justify-content: space-between;
  padding: 16px 26px 16px 24px;
`;

const StInsertSection = styled.section`
  ${section}
  display: grid;
  gap: 15px;
  padding: 19px 26px 26px 26px;
`;

/* 서식 패널을 강조하는 빨간 테두리와 화살표 */
const StCalloutBox = styled.div`
  position: absolute;
  top: -9px;
  right: 8px;
  bottom: 9px;
  left: -16px;
  border: 10px solid #eb4025;
  pointer-events: none;
`;

const StCalloutArrow = styled.svg`
  position: absolute;
  top: 0;
  left: 0;
  pointer-events: none;
`;
